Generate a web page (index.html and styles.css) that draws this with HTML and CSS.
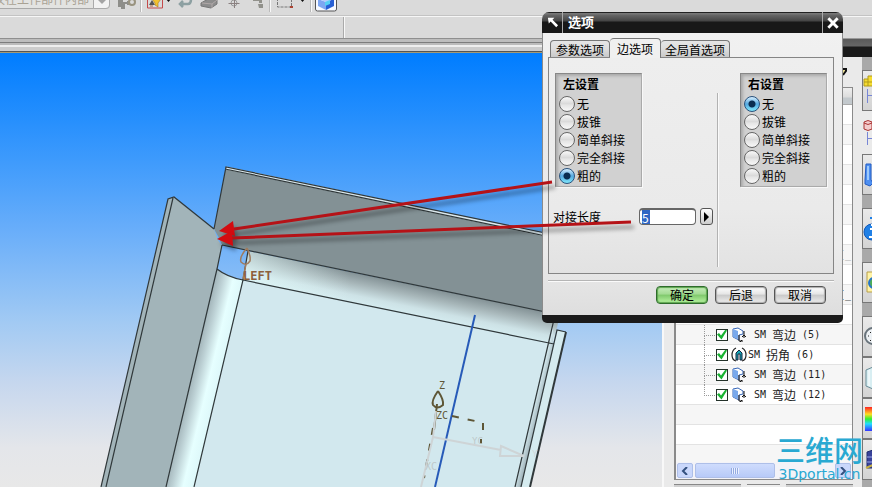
FILE: index.html
```html
<!DOCTYPE html>
<html lang="zh-CN">
<head>
<meta charset="utf-8">
<title>选项</title>
<link rel="stylesheet" href="styles.css">
</head>
<body>
<div class="app">
  <header class="toolbars">
    <div class="toolbar">
      <label class="scope"><select aria-label="选择范围" disabled><option>仅在工作部件内部</option></select><span class="scope-arrow"></span></label>
      <svg class="tools" viewBox="0 0 230 16" width="230" height="16" aria-hidden="true">
        <g fill="#8e8e8a"><path d="M8 0h5v3h5v2h-3v5h-4v-2h-3zM17 2h3v4h-3z"/><circle cx="22" cy="3" r="3" fill="none" stroke="#99937f" stroke-width="2"/></g>
        <path d="M31.500 0v13M160.500 0v13M201.500 0v13" stroke="#f8f8f8"/><path d="M30.500 0v13M159.500 0v13M200.500 0v13" stroke="#bbb"/>
        <path d="M37.500 -1v10h15v-10" fill="none" stroke="#c44a4a"/><path d="M39 6l3-5 3 5z" fill="#555"/><path d="M42 0h9l-3 4v4l-3-2v-2z" fill="#f2c230" stroke="#a87a18" stroke-width=".6"/><path d="M40 7h3" stroke="#a64"/>
        <path d="M56 0h5l-2.500 3zM190 0h5l-2.500 3z" fill="#111"/>
        <path d="M71 5h7q3 0 3-5M73 2l-3 3 3 3" fill="none" stroke="#8da0a2" stroke-width="2.500"/>
        <path d="M91 4l7-4 9 1v4l-6 4-10-2z" fill="#8c8c8c" stroke="#777"/><path d="M92 4l10 1 5-4M102 5v4" fill="none" stroke="#b0a8a8"/>
        <circle cx="124" cy="4" r="3" fill="none" stroke="#999"/><path d="M118.500 4.500h11M124.500 -1v10" stroke="#8a8080"/>
        <path d="M143 0h9v4h-3v-2h-6zM148 5h5v4h-4z" fill="#91918b"/>
        <path d="M167.500 -1v9h14v-9" fill="none" stroke="#777" stroke-dasharray="3 1"/><path d="M180 7h3v2h-3z" fill="#a43"/>
        <path d="M205.500 -1v11q0 2 2 2h17q2 0 2-2v-11" fill="#f7f9ff" stroke="#555"/>
        <path d="M208 0l8 3v8l-8-4z" fill="#7da6f2"/><path d="M216 3l8-3v7l-8 4z" fill="#275fd4"/><path d="M208 0h16l-8 3z" fill="#b4cbfa"/><path d="M215 3l5-2v4l-5 2z" fill="#55d0f4"/>
      </svg>
    </div>
    <div class="toolbar-empty"></div>
  </header>

  <div class="workspace">
    <main class="canvas-pane">
      <div class="canvas-edge"></div>
      <div class="canvas">
        <svg class="model" viewBox="0 54 662 433" preserveAspectRatio="xMinYMin slice" role="img" aria-label="钣金模型">
          <defs>
            <linearGradient id="bendTop" gradientUnits="userSpaceOnUse" x1="400" y1="282" x2="394" y2="311"><stop offset="0" stop-color="#839195"/><stop offset=".35" stop-color="#a6b5b8"/><stop offset=".75" stop-color="#cde2e6"/><stop offset="1" stop-color="#d4ebef"/></linearGradient>
            <linearGradient id="bendLight" gradientUnits="userSpaceOnUse" x1="243" y1="0" x2="350" y2="0"><stop offset="0" stop-color="#e2fafa" stop-opacity=".6"/><stop offset="1" stop-color="#e2fafa" stop-opacity="0"/></linearGradient>
            <linearGradient id="bendLeft" gradientUnits="userSpaceOnUse" x1="188" y1="390" x2="217" y2="397"><stop offset="0" stop-color="#a2b4b9"/><stop offset=".25" stop-color="#bdd1d5"/><stop offset=".6" stop-color="#e6ffff"/><stop offset="1" stop-color="#dcf7f9"/></linearGradient>
            <linearGradient id="bendRight" gradientUnits="userSpaceOnUse" x1="533" y1="410" x2="541" y2="412"><stop offset="0" stop-color="#d0e5ea"/><stop offset="1" stop-color="#91a3aa"/></linearGradient>
          </defs>
          <path d="M226 167L560 237V315L222 245L218 236L214 229Z" fill="#839195"/>
          <path d="M226 168L560 238" stroke="#dbe8ec" stroke-width="3"/>
          <path d="M248 251L560 315L553 344L243 280Z" fill="url(#bendTop)"/>
          <path d="M248 251L350 272V302L243 280Z" fill="url(#bendLight)"/>
          <path d="M243 280L553 344L515 487H194Z" fill="#d2e8ee"/>
          <path d="M168 199L174 197L214 229L218 240L222 246L217 269L166 487H101Z" fill="#a2b4b9"/>
          <path d="M217 269Q227 277 243 280L194 487H166Z" fill="url(#bendLeft)"/>
          <path d="M553 324V343L554 344L521 487H515Z" fill="url(#bendRight)"/>
          <path d="M557 330L566 332L530 487H521Z" fill="#d5ebef"/>
          <g fill="none" stroke="#30383a" stroke-width="1.200">
            <path d="M214 229L226 167L560 236M225 169L560 239M222 245L560 315M243 280L554 344M243 280L248 251M214 229L174 197L168 199L101 487M173 198L106 487M222 245L217 269L166 487M217 269Q227 277 243 280L194 487M555 315L515 487M521 487L557 330L566 332"/>
            <path d="M566 332L530 487" stroke-width="2"/>
          </g>
          <path d="M475 315L435 487" stroke="#275ab8" stroke-width="2"/>
          <g fill="none" stroke="#a07c5f" stroke-width="1.500"><path d="M247 248Q239 257 241 262Q246 267 250 261Q251 256 247 248M246 264L243 279"/></g>
          <g fill="none" stroke="#5e5636" stroke-width="2"><path d="M438 391Q431 401 433 405Q437 410 443 405Q444 400 438 391M437 404L434 430"/><path d="M452 416L475 421M483 423V430M481 439V444M433 428L424 478" stroke-dasharray="7 9"/></g>
          <g fill="none" stroke="#ced4d6" stroke-width="2"><path d="M436 411L433 437L421 487M433 437L501 450M501 446L524 456L500 456Z"/></g>
          <g class="axis-text">
            <text x="243" y="280" fill="#8c603c" font-size="12" font-weight="bold">LEFT</text>
            <text x="439" y="389" fill="#5e5636" font-size="10">Z</text>
            <text x="436" y="419" fill="#5e5636" font-size="10">ZC</text>
            <text x="472" y="444" fill="#bec8ca" font-size="9">YC</text>
            <text x="425" y="470" fill="#bec8ca" font-size="10">XC</text>
            <text x="532" y="457" fill="#d2d8da" font-size="9">Y</text>
          </g>
        </svg>
      </div>
    </main>

    <aside class="side">
      <div class="side-title"></div>
      <div class="side-body">
        <section class="navigator">
          <div class="nav-top"><svg width="10" height="12" viewBox="0 0 10 12" aria-hidden="true"><path d="M1 3h6v2l-3 4" fill="#eadf92" stroke="#111" stroke-width="2"/></svg></div>
          <div class="tree">
            <div class="tree-head"></div>
            <ul class="tree-rows">
              <li></li><li></li><li></li><li></li><li></li><li></li><li></li>
              <li class="stub faint">[_</li><li></li><li class="stub">[_</li><li></li>
              <li class="item"><input type="checkbox" id="n5" checked><label for="n5"><svg class="bend" viewBox="0 0 16 16"><path d="M2 2l5-1 5 3v3l-4 1v5l-6-3z" fill="#fff" stroke="#3765b5"/><path d="M2 2l5 2v8l-5-2z" fill="#78a8ec"/><path d="M8 8v6h4M13 4v7M11 10l2-2 2 2M9 15l2-2" fill="none" stroke="#111"/></svg>SM <b>弯边</b> (5)</label></li>
              <li class="item tight"><input type="checkbox" id="n6" checked><label for="n6"><svg class="bend" viewBox="0 0 16 16"><path d="M5 14q-4-1-4-6 0-5 4-7M11 14q4-1 4-6 0-5-4-7" fill="#fff" stroke="#222" stroke-width="1.200"/><path d="M5 13V6l3-3 3 3v7H9V7H7v6z" fill="#16a5b5" stroke="#16233c"/></svg>SM <b>拐角</b> (6)</label></li>
              <li class="item"><input type="checkbox" id="n11" checked><label for="n11"><svg class="bend" viewBox="0 0 16 16"><path d="M2 2l5-1 5 3v3l-4 1v5l-6-3z" fill="#fff" stroke="#3765b5"/><path d="M2 2l5 2v8l-5-2z" fill="#78a8ec"/><path d="M8 8v6h4M13 4v7M11 10l2-2 2 2M9 15l2-2" fill="none" stroke="#111"/></svg>SM <b>弯边</b> (11)</label></li>
              <li class="item last"><input type="checkbox" id="n12" checked><label for="n12"><svg class="bend" viewBox="0 0 16 16"><path d="M2 2l5-1 5 3v3l-4 1v5l-6-3z" fill="#fff" stroke="#3765b5"/><path d="M2 2l5 2v8l-5-2z" fill="#78a8ec"/><path d="M8 8v6h4M13 4v7M11 10l2-2 2 2M9 15l2-2" fill="none" stroke="#111"/></svg>SM <b>弯边</b> (12)</label></li>
              <li></li><li></li><li></li>
            </ul>
            <div class="scrollbar">
              <button type="button" aria-label="向左滚动"><svg viewBox="0 0 8 8"><path d="M6 0L2 4l4 4" fill="none" stroke="#33507e" stroke-width="2"/></svg></button>
              <span class="thumb"></span>
              <button type="button" aria-label="向右滚动"><svg viewBox="0 0 8 8"><path d="M2 0l4 4-4 4" fill="none" stroke="#33507e" stroke-width="2"/></svg></button>
            </div>
          </div>
          <div class="nav-foot"><i></i><i></i><i></i></div>
        </section>
        <nav class="resource-bar">
          <span class="gap"></span>
          <button type="button" aria-label="装配导航器"><svg viewBox="0 0 10 40"><path d="M1 15V8h4V5h5v10z" fill="#f5dc32" stroke="#b19b18"/><path d="M1 11h9M5 8v7" stroke="#b19b18"/><path d="M4.500 18v14M4 24.500h6" stroke="#7786d6" fill="none"/></svg></button>
          <button type="button" class="active" aria-label="部件导航器"><svg viewBox="0 0 10 40"><path d="M1 9q4-3 8 0v7q-4 3-8 0z" fill="#f3cccc" stroke="#aa3434"/><path d="M1 10q4 3 8 0" fill="none" stroke="#aa3434"/><path d="M4.500 19v13M4 25.500h6" stroke="#7786d6"/></svg></button>
          <button type="button" aria-label="重用库"><svg viewBox="0 0 10 40"><path d="M3 9h5v16l2 3-3 3-5-2v-4z" fill="#4e8ff0" stroke="#235cc4"/><path d="M5 11v14" stroke="#b7dcff" stroke-width="1.500"/></svg></button>
          <span class="gap"></span>
          <button type="button" aria-label="信息"><svg viewBox="0 0 10 40"><circle cx="9" cy="23" r="8" fill="#2080e6" stroke="#1058b8"/><path d="M7 20h3v8M6 28h4M8 16h2" stroke="#fff" stroke-width="2" fill="none"/><path d="M7 9h3" stroke="#2080e6" stroke-width="2"/></svg></button>
          <span class="gap"></span>
          <button type="button" aria-label="浏览器"><svg viewBox="0 0 10 40"><path d="M4 9h7v20H4z" fill="#fff3a6" stroke="#b8a04a"/><circle cx="11" cy="20" r="5" fill="#4eae58" stroke="#2875c6" stroke-width="2"/></svg></button>
          <span class="gap"></span>
          <button type="button" aria-label="历史记录"><svg viewBox="0 0 10 40"><circle cx="10" cy="19" r="8" fill="#edf1f4" stroke="#69747c" stroke-width="2"/><path d="M10 14v5M5 19h1M7 15l1 1M7 24l1-1" stroke="#222"/></svg></button>
          <button type="button" aria-label="系统材料"><svg viewBox="0 0 10 40"><path d="M3 12l7-3v22l-7-3z" fill="#d8eef2" stroke="#6b8d98"/><path d="M6 12v16" stroke="#fff"/></svg></button>
          <button type="button" aria-label="颜色"><span class="spectrum"></span></button>
          <button type="button" aria-label="角色"><svg viewBox="0 0 10 40"><path d="M4 12l6-2v18H4z" fill="#39429a" stroke="#222d70"/><path d="M4 17h6M4 22h6" stroke="#9ca7e8"/><path d="M3 28l7-3" stroke="#c7b142" stroke-width="2"/></svg></button>
        </nav>
      </div>
    </aside>
  </div>

  <form class="dialog" role="dialog" aria-labelledby="dlg-title">
    <div class="titlebar">
      <span class="title-icon"><svg viewBox="0 0 14 14"><path d="M2 2h7L7 4l6 6-2 2-6-6-2 2z" fill="#fff"/></svg></span>
      <h1 id="dlg-title">选项</h1>
      <button type="button" class="close" aria-label="关闭"><svg viewBox="0 0 12 12"><path d="M2 2l8 8M10 2l-8 8" stroke="#fff" stroke-width="2.500"/></svg></button>
    </div>
    <div class="dialog-body">
      <div class="tabs" role="tablist">
        <button type="button" role="tab">参数选项</button>
        <button type="button" role="tab" class="selected" aria-selected="true">边选项</button>
        <button type="button" role="tab">全局首选项</button>
      </div>
      <div class="pane">
        <div class="col">
          <fieldset>
            <legend>左设置</legend>
            <label><input type="radio" name="left">无</label>
            <label><input type="radio" name="left">拔锥</label>
            <label><input type="radio" name="left">简单斜接</label>
            <label><input type="radio" name="left">完全斜接</label>
            <label><input type="radio" name="left" checked>粗的</label>
          </fieldset>
          <div class="length">
            <label for="butt">对接长度</label>
            <input type="text" id="butt" value="5">
            <button type="button" aria-label="更多"><svg viewBox="0 0 6 10"><path d="M0 0l5 5-5 5z"/></svg></button>
          </div>
        </div>
        <div class="rule"></div>
        <div class="col col-right">
          <fieldset>
            <legend>右设置</legend>
            <label><input type="radio" name="right" checked>无</label>
            <label><input type="radio" name="right">拔锥</label>
            <label><input type="radio" name="right">简单斜接</label>
            <label><input type="radio" name="right">完全斜接</label>
            <label><input type="radio" name="right">粗的</label>
          </fieldset>
        </div>
      </div>
      <div class="actions">
        <button type="button" class="primary">确定</button>
        <button type="button">后退</button>
        <button type="button">取消</button>
      </div>
    </div>
  </form>

  <svg class="arrows" width="660" height="260" viewBox="0 0 660 260" aria-hidden="true">
    <g class="arrow"><path d="M552 182L234 229" stroke="#b51217" stroke-width="3"/><path d="M219 231L233 221L235 236Z" fill="#d30b10"/></g>
    <g class="arrow"><path d="M631 222L232 238" stroke="#b51217" stroke-width="3"/><path d="M217 239L232 231L233 246Z" fill="#d30b10"/></g>
  </svg>

  <div class="watermark"><strong>三维网</strong><span>3Dportal.cn</span></div>
</div>
</body>
</html>
```
FILE: styles.css
```css
* { box-sizing: border-box; }
body {
  margin: 0;
  font: 12px/18px "Noto Sans CJK SC", sans-serif;
  color: #000;
  background: #d9d9d9;
}
button, input, select { font: inherit; color: inherit; margin: 0; }
button { padding: 0; border: 0; background: none; }
.app {
  position: relative;
  height: 100vh;
  overflow: hidden;
  display: flex;
  flex-direction: column;
}

/* toolbars */
.toolbars { flex: none; }
.toolbar {
  height: 16px;
  display: flex;
  align-items: flex-end;
  overflow: hidden;
  background: #dadada;
  border-bottom: 1px solid #c3c3c3;
}
.scope { position: relative; margin: 0 0 6px -16px; width: 126px; }
.scope select {
  appearance: none;
  display: block;
  width: 100%;
  height: 22px;
  padding: 2px 0 0 8px;
  border: 1px solid #a9a9a9;
  border-radius: 4px;
  background: #e3e3e1;
  color: #a9a294;
  opacity: 1;
}
.scope-arrow {
  position: absolute;
  right: 0;
  bottom: 0;
  width: 17px;
  height: 20px;
  border: 1px solid #aaa;
  border-radius: 0 4px 4px 0;
  background: #f2f2f2;
}
.scope-arrow::after {
  content: "";
  position: absolute;
  left: 3px;
  bottom: 4px;
  border: 5px solid transparent;
  border-top-color: #a3a3a3;
  border-bottom: 0;
}
.tools { display: block; }
.toolbar-empty {
  height: 22px;
  border-top: 1px solid #f6f6f6;
  background: linear-gradient(90deg, transparent 343px, #aaa 343px 344px, #f8f8f8 344px 345px, transparent 345px), #dadada;
}

/* workspace */
.workspace { flex: 1; min-height: 0; display: flex; }
.canvas-pane { flex: 1; min-width: 0; display: flex; flex-direction: column; }
.canvas-edge {
  flex: none;
  height: 16px;
  background: linear-gradient(#8f8f8f 0 1px, #bdbdbd 1px 4px, #7c7c7c 4px 5px, #bbb 5px 7px, #eee 7px 9px, #ccc 9px 13px, #555 13px 14px, #a39a75 14px 15px, #007dff 15px);
}
.canvas {
  flex: 1;
  min-height: 0;
  background: linear-gradient(#007dff, #3f9bfc 25%, #67adfa 40%, #a2caf3 62%, #c6d7ee 76%, #e4e6ea 91%, #e8e8e8);
}
.model { display: block; width: 100%; height: 100%; }
.axis-text { font-family: "DejaVu Sans Mono", monospace; }

/* side panel */
.side { flex: none; width: 210px; display: flex; flex-direction: column; background: #eaeaea; }
.side-title {
  height: 19px;
  border-top: 1px solid #999;
  background: linear-gradient(#5a5a5a, #666 7px, #1a1a1a 8px);
}
.side-body { flex: 1; min-height: 0; display: flex; }
.navigator { flex: 1; min-width: 0; display: flex; flex-direction: column; padding: 0 9px 0 10px; border-left: 2px solid #f8f8f8; }
.nav-top { height: 30px; display: flex; align-items: center; justify-content: flex-end; padding-right: 4px; }
.tree { flex: 1; min-height: 0; display: flex; flex-direction: column; border: 1px solid #8a8a8a; border-left-width: 2px; background: #fff; }
.tree-head { flex: none; height: 17px; background: linear-gradient(#eee, #ddd 9px, #c3c9cd 10px); border-bottom: 1px solid #aaa; }
.tree-rows { flex: 1; min-height: 0; overflow: hidden; margin: 0; padding: 0; list-style: none; }
.tree-rows li { height: 20px; border-bottom: 1px solid #e3e3e3; }
.tree-rows li:nth-child(even) { background: #f6f6f6; }
.tree-rows .item, .tree-rows .stub { font: 10px/19px "DejaVu Sans Mono", "Noto Sans CJK SC", monospace; color: #222; }
.tree-rows .stub { padding-left: 163px; white-space: nowrap; }
.tree-rows .faint { color: #999; }
.item { display: flex; align-items: center; padding-left: 40px; position: relative; }
.item::before { content: ""; position: absolute; left: 28px; top: 0; width: 10px; height: 10px; border-left: 1px dotted #999; border-bottom: 1px dotted #999; }
.item:not(.last)::after { content: ""; position: absolute; left: 28px; top: 10px; height: 10px; border-left: 1px dotted #999; }
.item input {
  appearance: none;
  flex: none;
  width: 12px;
  height: 12px;
  border: 1px solid #24322a;
  background: #fff;
  display: grid;
  place-items: center;
}
.item input:checked::before { content: ""; width: 10px; height: 10px; background: #19b332; clip-path: polygon(0 50%, 20% 35%, 40% 60%, 85% 0, 100% 10%, 45% 100%); }
.item label { display: flex; align-items: center; white-space: pre; }
.item b { font: 12px/19px "Noto Sans CJK SC", sans-serif; }
.bend { width: 16px; height: 16px; margin: 0 7px 0 3px; }
.tight .bend { margin-right: 1px; }
.scrollbar { flex: none; height: 17px; display: flex; gap: 2px; padding: 1px; background: #f3f3f8; }
.scrollbar button { width: 16px; border: 1px solid #aebfe8; border-radius: 2px; background: #c9d7fb; display: grid; place-items: center; }
.scrollbar button:last-child { margin-left: auto; }
.scrollbar svg { width: 8px; height: 8px; }
.thumb {
  width: 80px;
  border: 1px solid #aebfe8;
  border-radius: 2px;
  background: repeating-linear-gradient(90deg, #93aae0 0 1px, #eaf0ff 1px 2px) center / 8px 6px no-repeat, linear-gradient(#cfdcfd, #b7caf8);
}
.nav-foot { flex: none; height: 7px; display: flex; gap: 6px; padding-top: 4px; }
.nav-foot i { flex: 2; background: #d0d0d0; border-top: 1px solid #888; }
.nav-foot i:nth-child(2) { flex: 1; background: #eee; }

.resource-bar { flex: none; width: 10px; display: flex; flex-direction: column; background: #a9a9a9; overflow: hidden; }
.resource-bar button { flex: none; height: 41px; border: solid #777; border-width: 1px 0 1px 1px; background: linear-gradient(#eaeaea, #d3d3d3); }
.resource-bar .active { height: 43px; border-color: transparent; background: #eaeaea; }
.resource-bar svg { display: block; width: 10px; height: 40px; }
.gap { flex: none; height: 13px; }
.spectrum { display: block; height: 24px; margin-left: 2px; background: linear-gradient(#f22, #fd2 30%, #3e3 50%, #2df 70%, #33f); }

/* options dialog */
.dialog {
  position: absolute;
  top: 12px;
  right: 29px;
  width: 301px;
  border-radius: 7px 7px 5px 5px;
  border-bottom: 8px solid #1b1b1b;
  background: #ececec;
  overflow: hidden;
}
.titlebar { height: 21px; display: flex; align-items: stretch; color: #fff; background: linear-gradient(#222 0 1px, #777 1px 2px, #666 3px, #444 9px, #181818 10px); }
.title-icon { width: 21px; display: grid; place-items: center; border-right: 1px solid #aaa; }
.title-icon svg { width: 13px; height: 13px; }
.titlebar h1 { flex: 1; margin: 0; padding-left: 5px; font-size: 13px; line-height: 19px; font-weight: 700; }
.close { width: 21px; border-left: 1px solid #aaa; display: grid; place-items: center; }
.close svg { width: 14px; height: 14px; }
.dialog-body { padding: 5px 8px 11px 5px; border: solid #8b8b8b; border-width: 0 1px; background: linear-gradient(#f1f1f1, #eaeaea 40%, #ececec 75%, #dedede); }
.tabs { display: flex; align-items: flex-end; height: 19px; padding-left: 2px; }
.tabs button { height: 17px; padding: 0 5px; border: 1px solid #777; border-bottom: 0; border-radius: 4px 4px 0 0; line-height: 17px; background: linear-gradient(#e5e5e5, #ddd 50%, #c9c9c9); }
.tabs button + button { border-left-width: 0; padding: 0 4px; }
.tabs button.selected { height: 20px; padding: 0 7px; margin-bottom: -1px; background: #f0f0f0; z-index: 1; }
.pane { display: flex; min-height: 217px; padding: 15px 6px 6px; border: 1px solid #858585; background: linear-gradient(#eee, #eaeaea 70%, #e2e2e2); }
.col { flex: none; width: 162px; }
.col-right { width: auto; margin-left: auto; }
.rule { width: 2px; margin-top: 20px; background: linear-gradient(90deg, #b2b2b2 50%, #fafafa 50%); }
fieldset { width: 87px; height: 114px; margin: 0; padding: 0 0 0 3px; border: 1px solid; border-color: #888 #aaa #aaa #888; background: #d1d1d1; box-shadow: inset 2px 2px 3px #aaa, 1px 1px #f8f8f8; }
legend { float: left; width: 100%; height: 21px; padding: 0 0 0 4px; line-height: 20px; font-weight: 700; }
fieldset label { clear: both; display: flex; align-items: center; gap: 2px; height: 18px; white-space: nowrap; }
fieldset input {
  appearance: none;
  flex: none;
  width: 16px;
  height: 16px;
  border: 1px solid #666;
  border-radius: 50%;
  background: linear-gradient(#fafafa, #d8d8d8 50%, #e4e4e4 55%, #f8f8f8);
}
fieldset input:checked { border-color: #29527d; background: radial-gradient(circle, #0b2d50 0 3px, transparent 4px), linear-gradient(#d7efff, #55a8df 50%, #7fe6fa); }
.length { display: flex; align-items: center; margin: 20px 0 0 -2px; height: 19px; }
.length label { width: 86px; }
.length input { width: 57px; height: 17px; padding: 0 2px; border: 1px solid #666; border-top-width: 2px; border-radius: 4px; line-height: 14px; color: #fff; background: linear-gradient(90deg, #fff 2px, #2f66c4 2px 10px, #fff 10px); }
.length button { width: 13px; height: 17px; margin-left: 4px; border: 1px solid #555; border-radius: 3px; background: linear-gradient(#fff, #ccc); display: grid; place-items: center; }
.length svg { width: 6px; height: 10px; }
.actions { display: flex; justify-content: flex-end; gap: 7px; margin-top: 6px; padding: 5px 8px 0 0; border-top: 1px solid #b5b5b5; box-shadow: inset 0 1px #fafafa; }
.actions button { width: 52px; height: 18px; border: 1px solid #555; border-radius: 4px; line-height: 16px; background: linear-gradient(#fff, #e5e5e5 45%, #c9c9c9 50%, #eee); box-shadow: inset 0 0 1px 1px #aaa; }
.actions .primary { border-color: #2e6b2c; background: linear-gradient(#c6edbb, #a2da92 45%, #7fc86c 50%, #b9f5a2); box-shadow: inset 0 0 1px 1px #5ca54e; }

/* annotations */
.arrows { position: absolute; left: 0; top: 0; pointer-events: none; }
.arrow { filter: drop-shadow(3px 5px 2px rgba(0, 0, 0, .4)); }
.watermark { position: absolute; right: 9px; bottom: 6px; color: #29a9d2; text-align: center; pointer-events: none; }
.watermark strong { display: block; font-size: 29px; line-height: 36px; font-weight: 500; }
.watermark span { display: block; font: 14px/14px "DejaVu Sans", sans-serif; }
```
